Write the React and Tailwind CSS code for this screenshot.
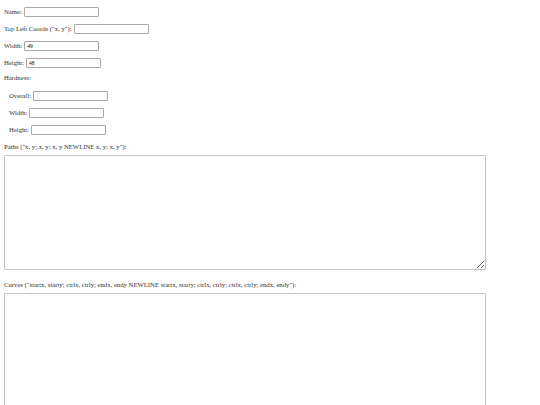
import React from "react";

function Field({ label, value = "", className = "" }) {
  return (
    <div className={`flex items-center gap-[2px] h-[10px] ${className}`}>
      <span>{label}</span>
      <input
        type="text"
        defaultValue={value}
        className="w-[75px] h-[10px] border border-[#a9a9a9] rounded-[1px] px-[2px] text-[5.5px] text-black leading-none outline-none bg-white"
      />
    </div>
  );
}

export default function App() {
  return (
    <div className="min-h-screen bg-white text-[6.7px] leading-none text-[#333] px-[4px] pt-[7px] font-['Liberation_Serif',serif]">
      <div className="flex flex-col gap-[7px]">
        <Field label="Name:" />
        <Field label={'Top Left Coords ("x, y"):'} />
        <Field label="Width:" value="49" />
        <Field label="Height:" value="48" />
        <div className="h-[10px] flex items-center -mt-[2px]">Hardness:</div>
        <Field label="Overall:" className="pl-[5px] mt-[1px]" />
        <Field label="Width:" className="pl-[5px]" />
        <Field label="Height:" className="pl-[5px]" />
        <div className="h-[10px] flex items-center">
          Paths ("x, y; x, y; x, y NEWLINE x, y; x, y"):
        </div>
      </div>
      <textarea className="block mt-[3px] w-[482px] h-[115px] border border-[#c4c4c4] rounded-[1px] outline-none" />
      <div className="h-[10px] flex items-center mt-[10px]">
        Curves ("startx, starty; ctrlx, ctrly; endx, endy NEWLINE startx, starty; ctrlx, ctrly; ctrlx, ctrly; endx, endy"):
      </div>
      <textarea className="block mt-[3px] w-[482px] h-[125px] border border-[#c4c4c4] rounded-[1px] outline-none" />
    </div>
  );
}
